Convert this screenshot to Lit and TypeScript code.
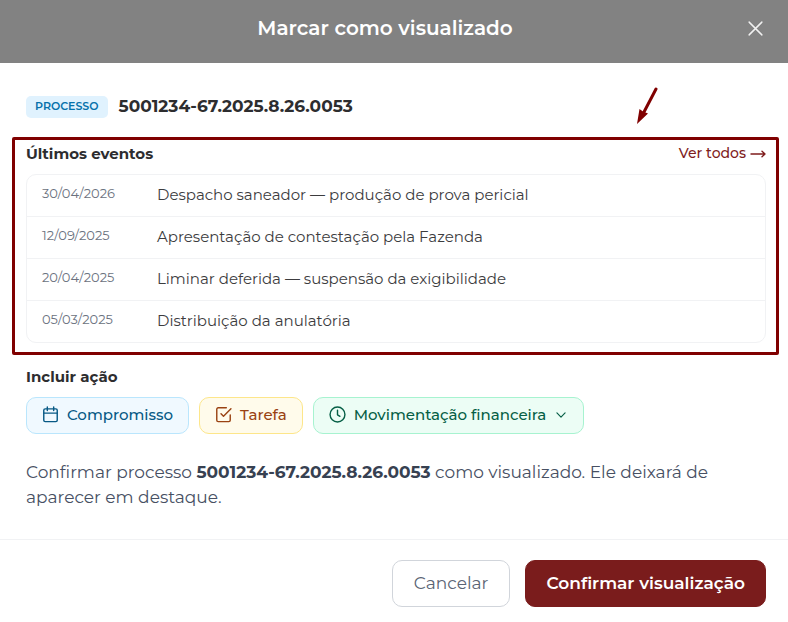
import { LitElement, html, css, svg } from "lit";
import { customElement, property } from "lit/decorators.js";

interface CaseEvent {
  date: string;
  iso: string;
  text: string;
}

const EVENTS: CaseEvent[] = [
  { date: "30/04/2026", iso: "2026-04-30", text: "Despacho saneador — produção de prova pericial" },
  { date: "12/09/2025", iso: "2025-09-12", text: "Apresentação de contestação pela Fazenda" },
  { date: "20/04/2025", iso: "2025-04-20", text: "Liminar deferida — suspensão da exigibilidade" },
  { date: "05/03/2025", iso: "2025-03-05", text: "Distribuição da anulatória" },
];

const icon = (size: number, width: number, body: unknown) => html`
  <svg width=${size} height=${size} viewBox="0 0 24 24" fill="none" stroke="currentColor"
    stroke-width=${width} stroke-linecap="round" stroke-linejoin="round" aria-hidden="true">${body}</svg>
`;

const calendar = svg`<rect x="2.5" y="4" width="19" height="18" rx="2"/><path d="M7.5 1.5v5M16.5 1.5v5M2.5 10h19"/>`;
const checkSquare = svg`<path d="M8.5 11l3.5 3.5L22.5 4"/><path d="M21.5 12.5V20a2 2 0 0 1-2 2h-15a2 2 0 0 1-2-2V4.5a2 2 0 0 1 2-2H16"/>`;
const clock = svg`<circle cx="12" cy="12" r="10.5"/><path d="M12 6v6.5l3.5 2"/>`;
const chevron = svg`<path d="M5 8.5l7 7 7-7"/>`;
const cross = svg`<path d="M3 3l18 18M21 3L3 21"/>`;

@customElement("app-root")
export class AppRoot extends LitElement {
  @property() processNumber = "5001234-67.2025.8.26.0053";

  static styles = css`
    :host {
      display: block;
      min-height: 100vh;
      background: #ffffff;
      color: #2d2d2f;
      font-family: Montserrat, Inter, "Open Sans", sans-serif;
      font-size: 16px;
    }
    * { box-sizing: border-box; }
    h1, h2, p { margin: 0; }
    button { font: inherit; cursor: pointer; }
    svg { display: block; flex: none; }

    .header {
      display: grid;
      grid-template-columns: 26px 1fr 26px;
      align-items: center;
      padding: 16px 20px 23px 2px;
      background: #828282;
      color: #ffffff;
    }
    .title {
      grid-column: 2;
      font-size: 20px;
      line-height: 24px;
      font-weight: 600;
      text-align: center;
    }
    .close {
      display: flex;
      align-items: center;
      justify-content: center;
      height: 24px;
      padding: 0;
      border: 0;
      background: none;
      color: #f1f1f1;
    }

    .body { padding: 33px 9px 29px 12px; }
    .block { padding: 0 13px 0 14px; }

    .process {
      display: flex;
      align-items: flex-start;
      gap: 11px;
      position: relative;
    }
    .badge {
      padding: 0 9px 2px;
      border-radius: 5px;
      background: #e0f2fe;
      color: #0671ab;
      font-size: 11px;
      line-height: 20px;
      font-weight: 600;
    }
    .number {
      font-size: 17px;
      line-height: 20px;
      font-weight: 700;
    }
    .pointer {
      position: absolute;
      right: 121px;
      top: -9px;
    }

    .events {
      margin-top: 19px;
      padding: 3px 10px 9px 11px;
      border: 3px solid #800000;
      border-radius: 2px;
    }
    .events-head {
      display: flex;
      justify-content: space-between;
      align-items: center;
      margin-bottom: 10px;
      line-height: 21px;
    }
    .subtitle {
      font-size: 15px;
      line-height: 21px;
      font-weight: 700;
    }
    .link {
      display: flex;
      align-items: center;
      gap: 4px;
      color: #7f1d1d;
      font-size: 14px;
      font-weight: 500;
      text-decoration: none;
    }
    .table {
      width: 100%;
      border: 1px solid #f1f2f4;
      border-radius: 10px;
      border-spacing: 0;
    }
    .table td, .table th {
      padding: 9px 0 10px;
      border-bottom: 1px solid #f1f2f4;
      text-align: left;
      vertical-align: top;
      font-weight: 400;
    }
    .table tr:last-child > * { border-bottom: 0; }
    .table .date {
      width: 130px;
      padding-left: 15px;
      color: #6b7280;
      font-size: 13px;
      line-height: 18px;
    }
    .table .text {
      color: #3c3c3e;
      font-size: 15px;
      line-height: 22px;
    }

    .actions-title { margin-top: 11px; }
    .actions {
      display: flex;
      flex-wrap: wrap;
      gap: 10px;
      margin-top: 10px;
    }
    .action {
      display: flex;
      align-items: center;
      gap: 8px;
      height: 37px;
      padding: 0 15px 2px;
      border: 1px solid;
      border-radius: 10px;
      font-size: 15px;
      line-height: 20px;
      font-weight: 500;
    }
    .sky { background: #f0f9ff; border-color: #bae6fd; color: #075985; }
    .amber { background: #fffbeb; border-color: #fde68a; color: #9a4212; }
    .green { background: #ecfdf5; border-color: #a7f3d0; color: #065f46; }

    .message {
      margin-top: 26px;
      color: #475063;
      font-size: 17px;
      line-height: 25px;
    }
    .message strong { color: #374151; font-weight: 700; }

    .footer {
      display: flex;
      justify-content: flex-end;
      gap: 15px;
      padding: 20px 22px 15px;
      border-top: 1px solid #f1f2f4;
    }
    .button {
      height: 47px;
      padding: 0 21px 2px;
      border: 1px solid #d1d5db;
      border-radius: 10px;
      background: #ffffff;
      color: #5b6474;
      font-size: 17px;
    }
    .primary {
      padding: 0 20px 2px;
      border-color: #7a1c1c;
      background: #7a1c1c;
      color: #ffffff;
      font-weight: 600;
    }
  `;

  render() {
    return html`
      <header class="header">
        <h1 class="title">Marcar como visualizado</h1>
        <button class="close" type="button" aria-label="Fechar">${icon(17, 2, cross)}</button>
      </header>

      <main class="body">
        <div class="process block">
          <span class="badge">PROCESSO</span>
          <span class="number">${this.processNumber}</span>
          <svg class="pointer" width="22" height="38" viewBox="0 0 22 38" aria-hidden="true">
            <path d="M20 2L8 25" fill="none" stroke="#800000" stroke-width="3" stroke-linecap="round"/>
            <path d="M1 37L3.500 22L7 24.500L12 26.500Z" fill="#800000"/>
          </svg>
        </div>

        <section class="events">
          <div class="events-head">
            <h2 class="subtitle">Últimos eventos</h2>
            <a class="link" href="#eventos">Ver todos
              <svg width="16" height="8" viewBox="0 0 16 8" fill="none" stroke="currentColor"
                stroke-width="1.4" stroke-linecap="round" stroke-linejoin="round" aria-hidden="true">
                <path d="M1 4h14M12 1.200L15 4l-3 2.800"/>
              </svg>
            </a>
          </div>
          <table class="table" aria-label="Últimos eventos">
            <tbody>
              ${EVENTS.map((e) => html`
                <tr>
                  <th class="date" scope="row"><time datetime=${e.iso}>${e.date}</time></th>
                  <td class="text">${e.text}</td>
                </tr>
              `)}
            </tbody>
          </table>
        </section>

        <section class="block">
          <h2 class="subtitle actions-title">Incluir ação</h2>
          <div class="actions">
            <button class="action sky" type="button">${icon(17, 2, calendar)}Compromisso</button>
            <button class="action amber" type="button">${icon(17, 2, checkSquare)}Tarefa</button>
            <button class="action green" type="button" aria-haspopup="menu">
              ${icon(17, 2, clock)}Movimentação financeira${icon(14, 2, chevron)}
            </button>
          </div>
          <p class="message">Confirmar processo <strong>${this.processNumber}</strong> como visualizado. Ele deixará de aparecer em destaque.</p>
        </section>
      </main>

      <footer class="footer">
        <button class="button" type="button">Cancelar</button>
        <button class="button primary" type="button">Confirmar visualização</button>
      </footer>
    `;
  }
}
